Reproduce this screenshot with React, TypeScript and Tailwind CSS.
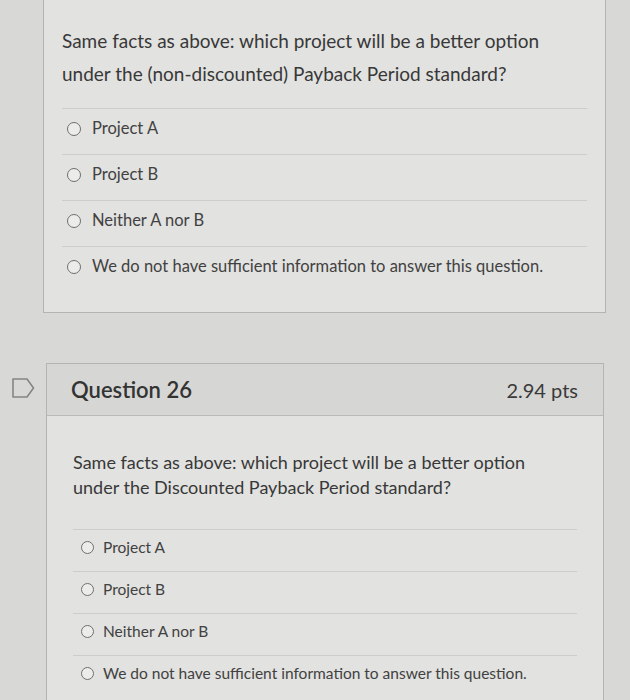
const optionsA = ["Project A", "Project B", "Neither A nor B", "We do not have sufficient information to answer this question."];

function Radio({ size }: { size: number }) {
  return (
    <span
      className="inline-block shrink-0 rounded-full border-[1.5px] border-[#6f6f6f] bg-[#ececea]"
      style={{ width: size, height: size }}
    />
  );
}

export default function App() {
  return (
    <div className="h-[700px] overflow-hidden bg-[#d8d8d6] font-['Lato',sans-serif] text-[#383838]">
      {/* Question 25 (tail) */}
      <div className="ml-[43px] mr-[24px] h-[313px] border border-t-0 border-[#b4b4b2] bg-[#e2e2e0] px-[18px] pt-[24px]">
        <p className="text-[19px] leading-[33px]">
          Same facts as above: which project will be a better option
          <br />
          under the (non-discounted) Payback Period standard?
        </p>
        <div className="mt-[18px]">
          {optionsA.map((o) => (
            <div
              key={o}
              className="flex h-[46px] items-center gap-[11px] border-t border-[#cdcdcb] pb-[6px] pl-[5px] text-[16.5px] text-[#414141]"
            >
              <Radio size={14} />
              <span>{o}</span>
            </div>
          ))}
        </div>
      </div>

      {/* Question 26 */}
      <div className="mt-[50px] flex">
        <div className="w-[46px] shrink-0 pl-[12px] pt-[15px]">
          <svg width="23" height="20" viewBox="0 0 23 20" fill="none">
            <path d="M1 1 H15 L21.5 10 L15 19 H1 Z" stroke="#858583" strokeWidth="1.6" strokeLinejoin="round" />
          </svg>
        </div>
        <div className="mr-[26px] h-[400px] flex-1 border border-[#b4b4b2] bg-[#e2e2e0]">
          <div className="flex h-[52px] items-center justify-between border-b border-[#b9b9b7] bg-[#d6d6d4] pl-[24px] pr-[25px]">
            <h2 className="text-[22px] font-semibold text-[#333]">Question 26</h2>
            <span className="text-[20px] text-[#3a3a3a]">2.94 pts</span>
          </div>
          <div className="px-[26px] pt-[34px]">
            <p className="text-[18px] leading-[25px]">
              Same facts as above: which project will be a better option
              <br />
              under the Discounted Payback Period standard?
            </p>
            <div className="mt-[29px]">
              {optionsA.map((o) => (
                <div
                  key={o}
                  className="flex h-[42px] items-center gap-[9px] border-t border-[#cdcdcb] pb-[6px] pl-[8px] text-[15.5px] text-[#414141]"
                >
                  <Radio size={13} />
                  <span>{o}</span>
                </div>
              ))}
            </div>
          </div>
        </div>
      </div>
    </div>
  );
}
